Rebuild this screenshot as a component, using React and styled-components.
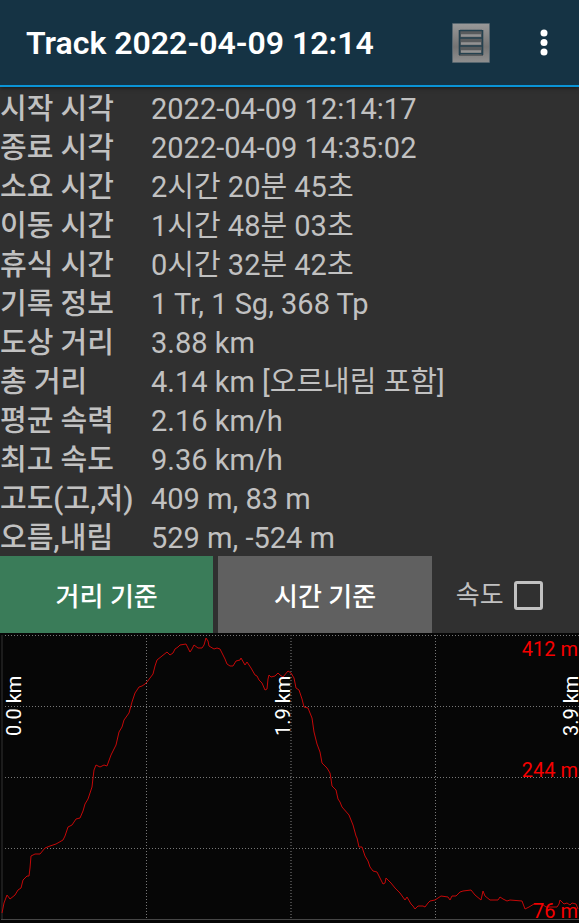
import React, { useState } from "react";
import styled, { createGlobalStyle } from "styled-components";

const GlobalStyle = createGlobalStyle`
  * {
    box-sizing: border-box;
  }

  body {
    margin: 0;
    background: #303030;
    color: #c1c1c1;
    font-family: Roboto, "Noto Sans CJK KR", sans-serif;
  }

  button, input {
    font-family: inherit;
  }
`;

const AppBar = styled.header`
  position: relative;
  display: flex;
  align-items: center;
  gap: 34px;
  height: 87px;
  padding: 0 16px 0 26px;
  background: #153344;
  border-bottom: 2px solid #0a94d6;
  box-shadow: 0 1px 4px rgba(0, 0, 0, 0.5);
`;

const Title = styled.h1`
  flex: 1;
  margin: 0;
  color: white;
  font-size: 32px;
  font-weight: 600;
  line-height: 40px;
  white-space: nowrap;
`;

const IconButton = styled.button`
  display: flex;
  justify-content: center;
  padding: 0;
  width: ${(props) => props.$width};
  background: none;
  border: none;
  cursor: pointer;

  svg {
    display: block;
  }
`;

const StatsTable = styled.table`
  width: 100%;
  border-collapse: collapse;
  table-layout: fixed;
  margin-bottom: 1px;
  font-size: 29px;
  line-height: 33px;
`;

const StatRow = styled.tr`
  height: 39px;
`;

const StatLabel = styled.th`
  width: 151px;
  padding: 6px 0 0;
  font-weight: 500;
  text-align: left;
  white-space: nowrap;
`;

const StatValue = styled.td`
  padding: 6px 0 0;
  white-space: nowrap;
`;

const Controls = styled.div`
  display: grid;
  grid-template-columns: 3fr 3fr 2fr;
  column-gap: 5px;
  height: 77px;
`;

const ModeButton = styled.button`
  padding: 0;
  border: none;
  background: ${(props) => (props.$active ? "#3a7c59" : "#606060")};
  color: white;
  font-size: 26px;
  font-weight: 500;
  cursor: pointer;
`;

const SpeedToggle = styled.label`
  display: flex;
  align-items: center;
  gap: 10px;
  padding: 2px 0 0 19px;
  font-size: 26px;
  line-height: 39px;
  white-space: nowrap;
`;

const Checkbox = styled.input`
  appearance: none;
  width: 29px;
  height: 29px;
  margin: 0;
  border: 3px solid #c1c1c1;
  border-radius: 3px;

  &:checked {
    background: #3a7c59;
  }
`;

const Chart = styled.svg`
  display: block;
  width: 100%;
  height: auto;
  background: #060606;
  font-size: 20px;
`;

const stats = [
  ["시작 시각", "2022-04-09 12:14:17"],
  ["종료 시각", "2022-04-09 14:35:02"],
  ["소요 시간", "2시간 20분 45초"],
  ["이동 시간", "1시간 48분 03초"],
  ["휴식 시간", "0시간 32분 42초"],
  ["기록 정보", "1 Tr, 1 Sg, 368 Tp"],
  ["도상 거리", "3.88 km"],
  ["총 거리", "4.14 km [오르내림 포함]"],
  ["평균 속력", "2.16 km/h"],
  ["최고 속도", "9.36 km/h"],
  ["고도(고,저)", "409 m, 83 m"],
  ["오름,내림", "529 m, -524 m"],
];

const elevation = `
  2,280 4,270 7,262 10,266 15,262 18,257 21,255 23,247 27,243 29,243 30,235
  31,223 35,221 40,221 45,215 50,213 56,211 63,207 65,203 68,194 72,192 76,186
  80,185 83,178 85,171 88,166 92,154 93,145 94,137 96,132 100,134 104,132
  107,133 111,122 116,112 119,99 122,94 124,87 129,80 132,69 135,60 139,54
  142,53 145,51 147,49 153,41 155,33 157,27 162,23 167,19 170,22 173,20 175,16
  178,14 180,12 186,11 187,13 190,19 192,16 194,12 198,15 202,15 204,12 206,5
  208,8 209,13 214,16 217,15 220,16 222,20 225,26 227,31 230,33 233,33 236,28
  240,27 241,25 245,32 247,29 251,35 255,42 257,43 259,47 262,50 265,57 267,56
  268,46 269,42 271,44 275,43 278,40 280,42 283,44 288,38 291,40 294,45 296,55
  299,57 302,66 304,74 308,75 312,85 314,99 317,111 320,119 322,130 327,135
  330,140 331,146 332,153 336,157 338,166 340,169 342,174 349,182 353,192
  356,203 357,205 359,214 362,214 365,223 368,228 370,234 373,238 377,239
  380,245 383,251 385,250 386,245 391,250 395,255 400,260 405,267 407,264
  411,271 413,273 415,276 418,273 423,273 425,274 428,270 430,268 435,267
  441,263 448,264 450,267 452,263 456,263 460,259 463,258 471,257 475,262
  481,267 483,258 485,263 490,267 498,267 500,264 503,266 507,268 510,267
  522,268 525,276 529,274 534,271 542,271 546,274 552,274 557,274 559,271
  560,267 564,271 567,270 570,272 572,270 576,271 578,276
`;

const distanceMarks = [
  { x: 21, text: "0.0 km" },
  { x: 290, text: "1.9 km" },
  { x: 578, text: "3.9 km" },
];

const altitudeMarks = [
  { y: 23, text: "412 m" },
  { y: 144, text: "244 m" },
  { y: 285, text: "76 m" },
];

function ListIcon() {
  return (
    <svg width="40" height="42" viewBox="0 0 40 42">
      <defs>
        <linearGradient id="plate" x1="0" y1="0" x2="0" y2="1">
          <stop offset="0" stopColor="#989898" />
          <stop offset="0.6" stopColor="#747474" />
          <stop offset="1" stopColor="#8e8e8e" />
        </linearGradient>
      </defs>
      <rect x="1" y="1" width="38" height="40" rx="1" fill="#56666f" />
      <rect x="2" y="2" width="36" height="38" fill="url(#plate)" />
      <rect x="8" y="8" width="24" height="26" fill="#585b5d" />
      <path
        d="M9 8.5H31M9 16H31M9 24H31M9 31.5H31M8.5 8V33M31.5 8V33"
        stroke="#24414f"
        strokeWidth="1.6"
        fill="none"
      />
      <path d="M10 13.5H30M10 21.5H30M10 29.5H30" stroke="#929292" strokeWidth="2.6" />
    </svg>
  );
}

function MoreIcon() {
  return (
    <svg width="8" height="28" viewBox="0 0 8 28" fill="white">
      <circle cx="4" cy="4" r="3.5" />
      <circle cx="4" cy="13.5" r="3.5" />
      <circle cx="4" cy="23" r="3.5" />
    </svg>
  );
}

function ElevationChart() {
  return (
    <Chart viewBox="0 0 579 290" role="img" aria-label="고도">
      <g stroke="#777" strokeDasharray="1 2" shapeRendering="crispEdges">
        {[2.5, 73.5, 144.5, 215.5].map((y) => (
          <line key={y} x1="2" x2="579" y1={y} y2={y} />
        ))}
        <line x1="146.5" x2="146.5" y1="2" y2="286" />
        <line x1="435.5" x2="435.5" y1="2" y2="286" />
        <line x1="291" x2="291" y1="2" y2="286" stroke="#444" strokeWidth="2" />
      </g>
      <path d="M2 2V286" stroke="#1c1c1c" strokeWidth="2" />
      <path d="M1 286.5H579" stroke="#454545" />
      <polyline points={elevation} fill="none" stroke="#c40808" strokeLinejoin="round" />
      <g fill="white">
        {distanceMarks.map(({ x, text }) => (
          <text key={text} transform={`translate(${x} 103) rotate(-90)`}>
            {text}
          </text>
        ))}
      </g>
      <g fill="#f60000" textAnchor="end">
        {altitudeMarks.map(({ y, text }) => (
          <text key={text} x="578" y={y}>
            {text}
          </text>
        ))}
      </g>
    </Chart>
  );
}

export default function App() {
  const [mode, setMode] = useState("distance");
  const [showSpeed, setShowSpeed] = useState(false);

  return (
    <>
      <GlobalStyle />
      <AppBar>
        <Title>Track 2022-04-09 12:14</Title>
        <IconButton $width="40px" aria-label="목록">
          <ListIcon />
        </IconButton>
        <IconButton $width="38px" aria-label="더보기">
          <MoreIcon />
        </IconButton>
      </AppBar>
      <main>
        <StatsTable>
          <tbody>
            {stats.map(([label, value]) => (
              <StatRow key={label}>
                <StatLabel scope="row">{label}</StatLabel>
                <StatValue>{value}</StatValue>
              </StatRow>
            ))}
          </tbody>
        </StatsTable>
        <Controls>
          <ModeButton $active={mode === "distance"} onClick={() => setMode("distance")}>
            거리 기준
          </ModeButton>
          <ModeButton $active={mode === "time"} onClick={() => setMode("time")}>
            시간 기준
          </ModeButton>
          <SpeedToggle>
            속도
            <Checkbox
              type="checkbox"
              checked={showSpeed}
              onChange={(e) => setShowSpeed(e.target.checked)}
            />
          </SpeedToggle>
        </Controls>
        <ElevationChart />
      </main>
    </>
  );
}
